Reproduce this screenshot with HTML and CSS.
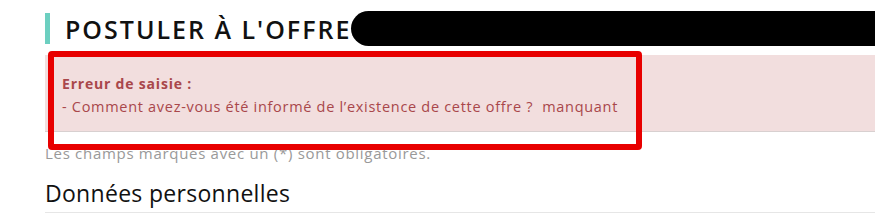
FILE: index.html
```html
<!DOCTYPE html>
<html lang="fr">
<head>
  <meta charset="UTF-8">
  <meta name="viewport" content="width=device-width, initial-scale=1.0">
  <title>Postuler à l'offre</title>
  <link rel="stylesheet" href="styles.css">
</head>
<body>
  <div class="page">
    <div class="title-row">
      <h1>POSTULER À L'OFFRE</h1>
      <span class="redacted"></span>
    </div>

    <div class="alert-wrap">
      <div class="alert">
        <strong>Erreur de saisie :</strong>
        <p>- Comment avez-vous été informé de l’existence de cette offre ?&nbsp; manquant</p>
      </div>
      <div class="highlight"></div>
    </div>

    <p class="required">Les champs marqués avec un (*) sont obligatoires.</p>

    <h2>Données personnelles</h2>
  </div>
</body>
</html>
```

FILE: styles.css
```css
body {
  margin: 0;
  font-family: "Open Sans", "Noto Sans", sans-serif;
  background-color: #fff;
  overflow: hidden;
}
.page {
  padding: 11px 0 0 45px;
}
.title-row {
  display: flex;
  align-items: center;
  height: 35px;
}
h1 {
  margin: 0;
  height: 31px;
  line-height: 33px;
  padding-left: 15px;
  border-left: 5px solid #6ccfc0;
  font-size: 25px;
  font-weight: 600;
  color: #111;
  letter-spacing: 2px;
}
.redacted {
  flex: 1;
  align-self: stretch;
  background-color: #000;
  border-radius: 18px 0 0 18px;
}
.alert-wrap {
  position: relative;
  margin-top: 9px;
}
.alert {
  background-color: #f2dede;
  border-bottom: 1px solid #d8d0d0;
  height: 77px;
  padding: 20px 0 0 17px;
  box-sizing: border-box;
  color: #a9474b;
  font-size: 14px;
}
.alert strong {
  display: block;
  font-size: 14px;
  font-weight: 700;
  line-height: 18px;
  letter-spacing: 0.8px;
}
.alert p {
  margin: 4px 0 0;
  line-height: 20px;
  font-size: 14.5px;
  letter-spacing: 0.7px;
}
/* annotation */
.highlight {
  position: absolute;
  left: 3px;
  top: -4px;
  width: 582px;
  height: 87px;
  border: 6px solid #e80000;
  border-radius: 4px;
}
.required {
  margin: 12px 0 0;
  color: #999;
  font-size: 15px;
  line-height: 18px;
  letter-spacing: 0.7px;
}
h2 {
  margin: 17px 0 0;
  padding-bottom: 5px;
  border-bottom: 1px solid #e6e6e6;
  font-size: 23px;
  font-weight: 400;
  color: #111;
  line-height: 28px;
  letter-spacing: 0.3px;
}
```
